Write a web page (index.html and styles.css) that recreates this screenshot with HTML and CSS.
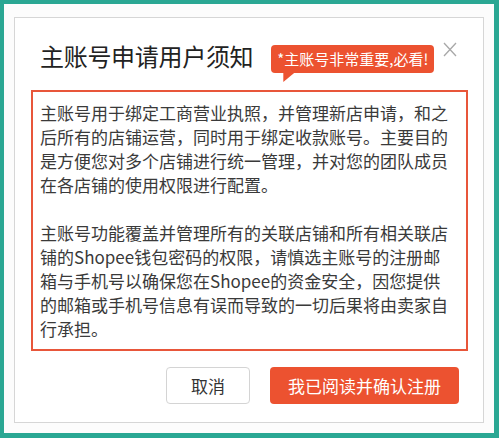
FILE: index.html
```html
<!DOCTYPE html>
<html lang="zh-CN">
<head>
<meta charset="utf-8">
<title>主账号申请用户须知</title>
<link rel="stylesheet" href="styles.css">
</head>
<body>
<div class="frame">
  <div class="dialog">
    <div class="header">
      <h1 class="title">主账号申请用户须知</h1>
      <div class="badge">*主账号非常重要,必看!</div>
      <button class="close" aria-label="关闭">
        <svg width="14" height="15" viewBox="0 0 14 15"><path d="M1 1 L13 14 M13 1 L1 14" stroke="#a8a8a8" stroke-width="1.3" fill="none"/></svg>
      </button>
    </div>
    <div class="notice">
      <p>主账号用于绑定工商营业执照，并管理新店申请，和之后所有的店铺运营，同时用于绑定收款账号。主要目的是方便您对多个店铺进行统一管理，并对您的团队成员在各店铺的使用权限进行配置。</p>
      <p>主账号功能覆盖并管理所有的关联店铺和所有相关联店铺的Shopee钱包密码的权限，请慎选主账号的注册邮箱与手机号以确保您在Shopee的资金安全，因您提供的邮箱或手机号信息有误而导致的一切后果将由卖家自行承担。</p>
    </div>
    <div class="actions">
      <button class="btn btn-cancel">取消</button>
      <button class="btn btn-primary">我已阅读并确认注册</button>
    </div>
  </div>
</div>
</body>
</html>
```

FILE: styles.css
```css
* { box-sizing: border-box; }
html, body { margin: 0; padding: 0; background: #ffffff; }
body {
  font-family: "Noto Sans CJK SC", "Noto Sans", sans-serif;
  color: #333;
}
.frame {
  width: 499px;
  height: 438px;
  border-style: solid;
  border-color: #2aa793;
  border-width: 4px 5px 5px 4px;
  background: #fcfcfc;
  padding: 13px 10px 10px 10px;
}
.dialog {
  height: 406px;
  background: #fff;
  border: 1px solid #d6d6d6;
  padding: 0 15px 0 16px;
}
.header {
  height: 72px;
  display: flex;
  align-items: flex-start;
}
.title {
  margin: 25px 0 0 9px;
  font-size: 24px;
  line-height: 26px;
  font-weight: 400;
  color: #222;
  letter-spacing: -0.3px;
}
.badge {
  position: relative;
  margin: 27px 0 0 18px;
  height: 28px;
  padding: 0 6px;
  background: #ec5230;
  color: #fff;
  font-size: 15px;
  line-height: 28px;
  border-radius: 4px;
  white-space: nowrap;
}
.badge::after {
  content: "";
  position: absolute;
  left: 12px;
  top: 27px;
  width: 12px;
  height: 10px;
  background: #ec5230;
  clip-path: polygon(0 0, 100% 0, 0 100%);
}
.close {
  margin: 24px 0 0 auto;
  margin-right: 11px;
  padding: 0;
  border: 0;
  background: none;
  width: 14px;
  height: 15px;
  line-height: 0;
}
.notice {
  border: 2px solid #e8563a;
  padding: 9px 10px 8px 7px;
}
.notice p {
  margin: 0;
  width: 409px;
  font-size: 17px;
  line-height: 24px;
  color: #3a3a3a;
}
.notice p + p { margin-top: 24px; }
.actions {
  display: flex;
  justify-content: flex-end;
  gap: 20px;
  margin-top: 16px;
  padding-right: 9px;
}
.btn {
  height: 37px;
  font-family: inherit;
  font-size: 17px;
  border-radius: 4px;
  padding: 0;
  cursor: pointer;
}
.btn-cancel {
  width: 84px;
  background: #fff;
  border: 1px solid #d4d4d4;
  color: #333;
}
.btn-primary {
  width: 189px;
  background: #ec5230;
  border: 0;
  color: #fff;
}
```
